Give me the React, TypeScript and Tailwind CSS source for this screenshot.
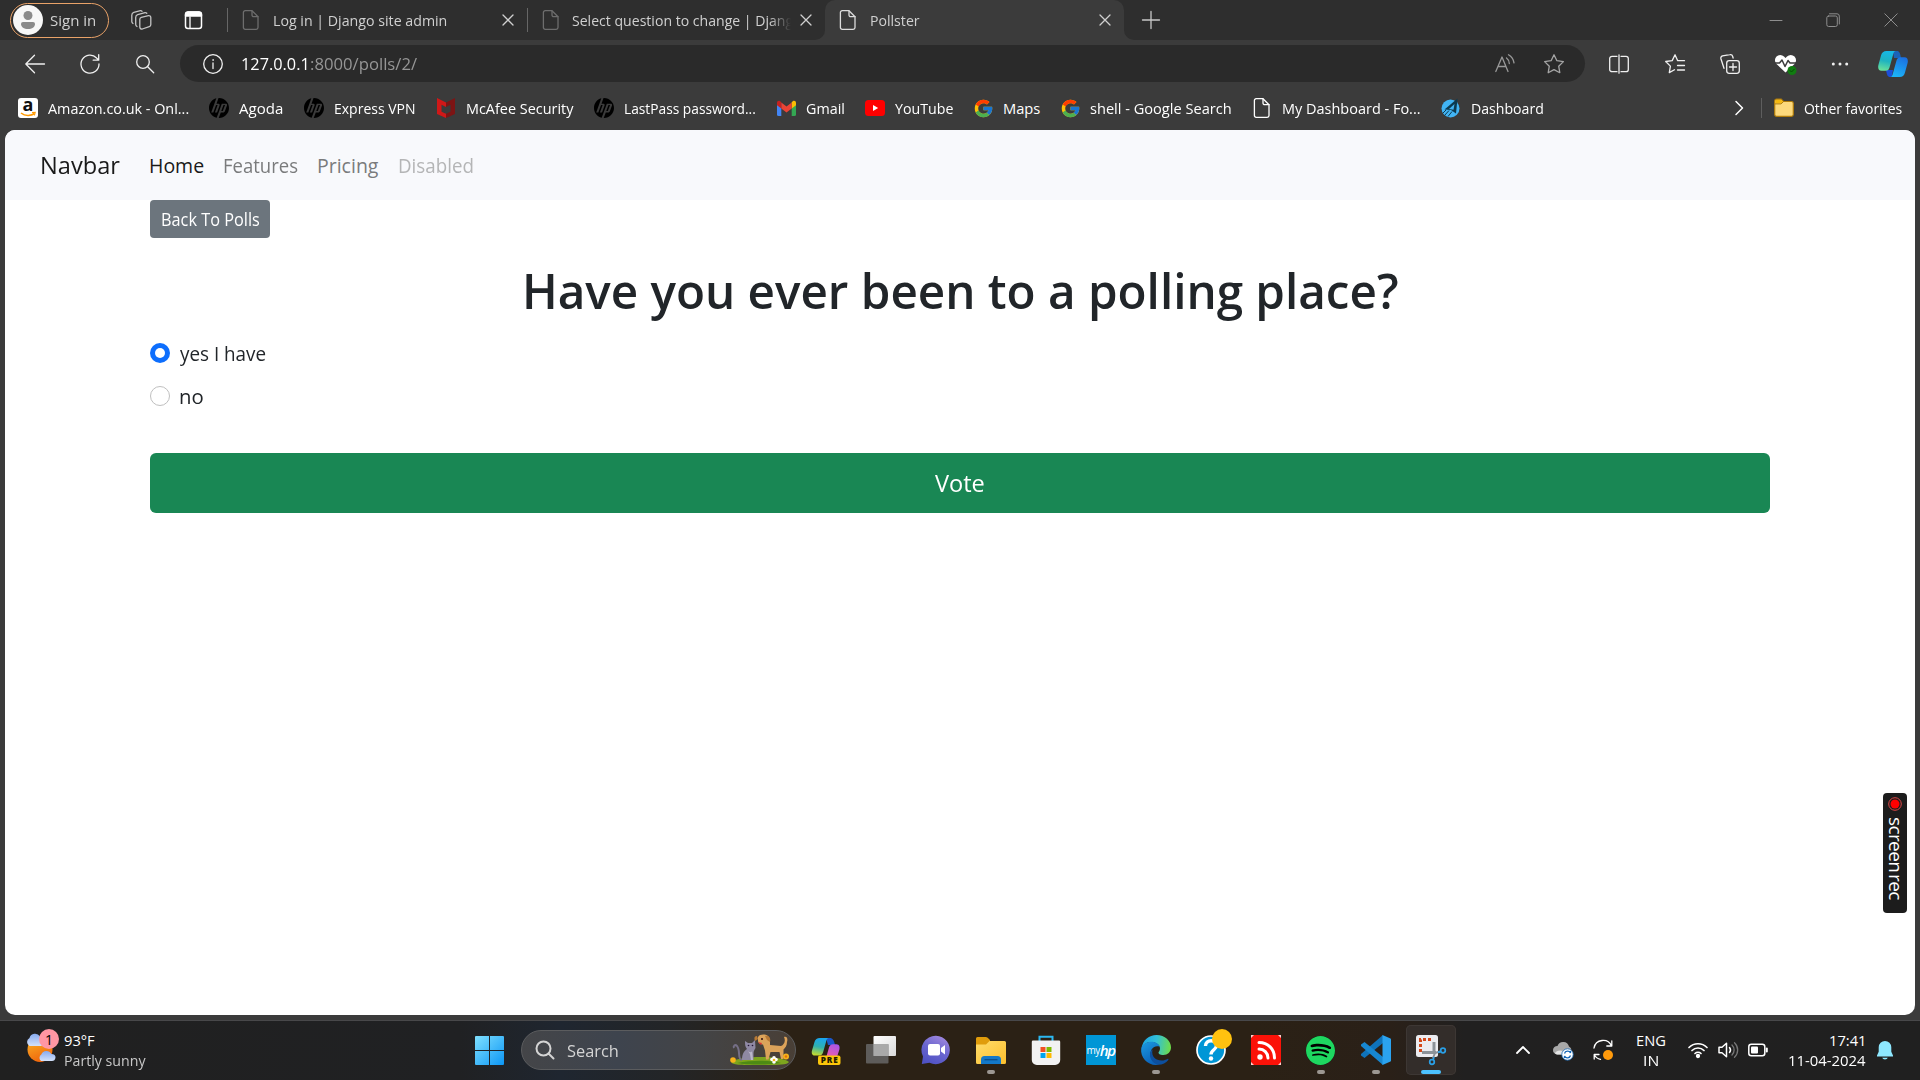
import { useLayoutEffect, useRef, useState } from "react";
import type { ReactNode } from "react";
import { FcGoogle } from "react-icons/fc";
import { SiHp, SiSpotify } from "react-icons/si";

/* Text condensed horizontally so that it fills the width given by its class. */
function Fit({ className, children }: { className: string; children: ReactNode }) {
  const box = useRef<HTMLSpanElement>(null);
  const text = useRef<HTMLSpanElement>(null);
  const [scale, setScale] = useState(1);
  useLayoutEffect(() => {
    if (box.current && text.current && text.current.offsetWidth) {
      setScale(box.current.clientWidth / text.current.offsetWidth);
    }
  }, []);
  return (
    <span ref={box} className={"block shrink-0 whitespace-nowrap " + className}>
      <span ref={text} className="inline-block origin-left" style={{ transform: `scaleX(${scale})` }}>
        {children}
      </span>
    </span>
  );
}

function Ic({ className = "", size = 20, box = "0 0 20 20", children }: { className?: string; size?: number; box?: string; children: ReactNode }) {
  return (
    <svg width={size} height={size} viewBox={box} fill="none" stroke="currentColor" strokeWidth="1.3" strokeLinecap="round" strokeLinejoin="round" className={"block shrink-0 overflow-visible " + className}>
      {children}
    </svg>
  );
}

const Doc = ({ className = "" }: { className?: string }) => (
  <Ic className={className}>
    <path d="M4.2 .7H11l6 6v10.800a1.800 1.800 0 0 1-1.800 1.800H4.200a1.800 1.800 0 0 1-1.800-1.800V2.500A1.800 1.800 0 0 1 4.200 .7Z" />
    <path d="M11 .9V5a1.700 1.700 0 0 0 1.700 1.700H17" />
  </Ic>
);

const Close = ({ className = "" }: { className?: string }) => (
  <Ic size={12} box="0 0 12 12" className={className}>
    <path d="M1 1l10 10M11 1L1 11" />
  </Ic>
);

const Hp = ({ className = "" }: { className?: string }) => (
  <span className={"flex size-5 shrink-0 items-center justify-center rounded-full bg-[#3b3b3b] text-black " + className}>
    <SiHp size={20} />
  </span>
);

function TabBar() {
  return (
    <div className="flex h-10 items-center bg-[#2e2e2e] text-[14.700px] text-[#d0d0d0]">
      <div className="ml-[10px] flex h-[35px] w-[99px] shrink-0 items-center rounded-full border-[1.500px] border-[#e9a268] pl-[2px]">
        <svg width="30" height="30" viewBox="0 0 30 30" className="block shrink-0">
          <circle cx="15" cy="15" r="15" fill="#f7f7f7" />
          <circle cx="15" cy="10.500" r="4.500" fill="#8a8a8a" />
          <path d="M10 17h10a2 2 0 0 1 2 2c0 3-3 5-7 5s-7-2-7-5a2 2 0 0 1 2-2Z" fill="#8a8a8a" />
        </svg>
        <Fit className="ml-[7px] w-[46px]">Sign in</Fit>
      </div>
      <Ic className="ml-[22px] text-[#c4c4c4]">
        <path d="M10.300 7.300 17.500 5.600a2 2 0 0 1 2.300 2v7a2 2 0 0 1-1.500 2l-7 2.400a2 2 0 0 1-2.500-2v-7.800a2 2 0 0 1 1.500-1.900Z" />
        <path d="M6 16.500a2.500 2.500 0 0 1-1.300-2V7.500a3 3 0 0 1 2-2.800L14 2.700a2 2 0 0 1 1.800 .6" />
        <path d="M2 13.500a2.500 2.500 0 0 1-1.200-2V5.200a3 3 0 0 1 2-2.800L9.500 .7a2 2 0 0 1 1.500 .5" />
      </Ic>
      <Ic className="ml-[33px] text-white">
        <rect x="1.500" y="2" width="16" height="16.500" rx="2.500" strokeWidth="1.500" />
        <path d="M1.500 6V4.500A3 3 0 0 1 4 2h11a3 3 0 0 1 2.500 2.500V6Z" fill="currentColor" />
        <path d="M6 7v11" />
      </Ic>
      <span className="ml-[23px] h-6 w-px shrink-0 bg-[#666]" />
      <Doc className="ml-[13px] text-[#6d6d6d]" />
      <Fit className="ml-[12px] w-[174px]">Log in | Django site admin</Fit>
      <Close className="ml-[55px] text-[#d0d0d0]" />
      <span className="ml-[13px] h-6 w-px shrink-0 bg-[#666]" />
      <Doc className="ml-[13px] text-[#6d6d6d]" />
      <div className="ml-[11px] w-[219px] shrink-0 overflow-hidden mask-r-from-90% mask-r-to-100%">
        <Fit className="w-[230px]">Select question to change | Django</Fit>
      </div>
      <Close className="ml-[9px] text-[#d0d0d0]" />
      <div className="relative ml-[13px] flex h-10 w-[299px] shrink-0 items-center rounded-t-[10px] bg-[#3b3b3b]">
        <span className="absolute -left-[10px] bottom-0 size-[10px] bg-[#3b3b3b]"><span className="block size-full rounded-br-[10px] bg-[#2e2e2e]" /></span>
        <span className="absolute -right-[10px] bottom-0 size-[10px] bg-[#3b3b3b]"><span className="block size-full rounded-bl-[10px] bg-[#2e2e2e]" /></span>
        <Doc className="ml-[13px] text-[#dcdcdc]" />
        <Fit className="ml-[12px] w-[50px]">Pollster</Fit>
        <Close className="ml-[179px]" />
      </div>
      <Ic className="ml-[17px] text-[#c8c8c8]">
        <path d="M10 1.500v17M1.500 10h17" />
      </Ic>
      <div className="mr-[22px] ml-auto flex items-center text-[#8e8e8e]">
        <Ic size={14} box="0 0 14 14"><path d="M1 7.500h12" strokeWidth="1" /></Ic>
        <Ic size={14} box="0 0 14 14" className="ml-[43px]">
          <rect x=".8" y="3" width="10.500" height="10.500" rx="1.800" strokeWidth="1" />
          <path d="M3.500 .8H11a2.300 2.300 0 0 1 2.300 2.300V11" strokeWidth="1" />
        </Ic>
        <Ic size={14} box="0 0 14 14" className="ml-[44px]"><path d="M.8 .8l12.400 12.400M13.200 .8L.8 13.200" strokeWidth="1" /></Ic>
      </div>
    </div>
  );
}

function Copilot({ size }: { size: number }) {
  return (
    <svg width={size} height={size} viewBox="0 0 30 30" className="block shrink-0">
      <defs>
        <linearGradient id="cpa" x1="0.500" y1="0" x2="0.300" y2="1">
          <stop offset="0" stopColor="#16b8e8" /><stop offset=".5" stopColor="#1fb3c0" /><stop offset="1" stopColor="#6be29a" />
        </linearGradient>
        <linearGradient id="cpb" x1="0.800" y1="0" x2="0.400" y2="1">
          <stop offset="0" stopColor="#1b6ee0" /><stop offset="1" stopColor="#1cb4f8" />
        </linearGradient>
      </defs>
      <path d="M8 21h7l-1 5.500c-.3 1-1 1.500-2 1.500-2.500 0-3-2-4-7Z" fill="#1c4fd8" />
      <path d="M15 2h4c2.500 0 3 2 4 7h-7Z" fill="#1b63b8" />
      <path d="M8.500 2H18c-2 0-2.500 2-3 4l-3.500 12.500c-.6 2-1.600 3.300-4 3.300H3.500C.5 21.800-.3 19 .4 16L3 6.500C3.800 3.500 5.500 2 8.500 2Z" fill="url(#cpa)" />
      <path d="M21.500 28H12c2 0 2.500-2 3-4l3.500-12.500c.6-2 1.600-3.300 4-3.300h4c3 0 3.800 2.800 3.100 5.800L27 23.500c-.8 3-2.500 4.500-5.500 4.500Z" fill="url(#cpb)" />
    </svg>
  );
}

function Toolbar() {
  return (
    <div className="flex h-[47px] items-center text-[#f0f0f0]">
      <Ic className="ml-[25px]"><path d="M19.500 10H.8M9.500 1.300.8 10l8.700 8.700" /></Ic>
      <Ic className="ml-[35px]"><path d="M19 10A9 9 0 1 1 16.600 4l2 2M18.700 .7v5.500h-5.500" /></Ic>
      <Ic className="ml-[35px]"><circle cx="8" cy="8" r="6.300" /><path d="M12.700 12.700l6 6" /></Ic>
      <div className="ml-[25px] flex h-[37px] w-[1405px] shrink-0 items-center rounded-full bg-[#2a2a2a]">
        <Ic className="ml-[23px]"><circle cx="10" cy="10" r="9.300" /><path d="M10 9v5.500" /><circle cx="10" cy="6" r=".5" fill="currentColor" strokeWidth=".6" /></Ic>
        <div className="ml-[18px] flex pt-px text-[17px]">
          <Fit className="w-[69px] text-white">127.0.0.1</Fit>
          <Fit className="w-[107px] text-[#969696]">:8000/polls/2/</Fit>
        </div>
        <Ic className="ml-auto text-[#999]"><path d="M.8 17.500 7 3l6 14.500M3 12.500h8" /><path d="M11.500 4a7 7 0 0 1 2.800 5.500M13.500 .8a11 11 0 0 1 5.500 8" /></Ic>
        <Ic className="mr-[21px] ml-[29px] text-[#a5a5a5]"><path d="M10 .8l2.900 5.900 6.500.9-4.700 4.600 1.100 6.500L10 15.600l-5.800 3.100 1.100-6.500L.6 7.600l6.500-.9Z" /></Ic>
      </div>
      <Ic className="ml-[24px]"><path d="M8 2.300H3A2.300 2.300 0 0 0 .7 4.600v10.800A2.300 2.300 0 0 0 3 17.700h5M12 2.300h5a2.300 2.300 0 0 1 2.300 2.300v10.800a2.300 2.300 0 0 1-2.300 2.300h-5M10 .8v18.400" /></Ic>
      <Ic className="ml-[36px]"><path d="M19.500 6.700H12.700L10 .8 7.200 6.600l-6.500.9 4.700 4.600-1.100 6.500 5.200-2.800M12.500 11.500h7M12.500 16h7" /></Ic>
      <Ic className="ml-[35px]"><rect x="6.700" y="6.700" width="12.600" height="12.600" rx="2.500" /><path d="M13 9.500v7M9.500 13h7M4 14.300 .9 4.700A2.500 2.500 0 0 1 2.500 1.800L9.800 .7a2.500 2.500 0 0 1 2.900 1.800l.4 1.500" /></Ic>
      <Ic className="ml-[35px]">
        <path d="M10.500 18.500 1.500 10a5.300 5.300 0 0 1 0-7.500 5.300 5.300 0 0 1 7.500 0L10.500 4l1.500-1.500a5.300 5.300 0 0 1 7.500 0 5.300 5.300 0 0 1 0 7.500Z" fill="#fff" stroke="none" />
        <path d="M0 9h4.500L7 6l3 6.500L13 6.500 15 9h6" stroke="#3b3b3b" strokeWidth="1.500" />
        <circle cx="17" cy="16.500" r="4.500" fill="#107c10" stroke="none" />
        <path d="M15 16.500l1.500 1.500 2.800-2.800" stroke="#064a06" strokeWidth="1" />
      </Ic>
      <Ic className="ml-[35px]"><g fill="currentColor" stroke="none"><circle cx="3.300" cy="10" r="1.500" /><circle cx="10" cy="10" r="1.500" /><circle cx="16.700" cy="10" r="1.500" /></g></Ic>
      <div className="ml-[28px]"><Copilot size={30} /></div>
    </div>
  );
}

const Folder = () => (
  <svg width="20" height="20" viewBox="0 0 20 20" className="block shrink-0">
    <path d="M.7 3a1.800 1.800 0 0 1 1.800-1.800h4.700L9.500 3.500h8a1.800 1.800 0 0 1 1.800 1.800v11.200a1.800 1.800 0 0 1-1.800 1.800h-15A1.800 1.800 0 0 1 .7 16.500Z" fill="#fcd97c" stroke="#b07c0a" strokeWidth="1.200" />
    <path d="M1.300 5.500V3a1.200 1.200 0 0 1 1.200-1.200H7l2 1.900-2 1.800Z" fill="#f5b90f" />
    <path d="M1 5.900h6l2.500-2.300" stroke="#b07c0a" fill="none" />
  </svg>
);

function Bookmarks() {
  return (
    <div className="flex h-[43px] items-center pb-px text-[14.700px] text-white">
      <svg width="20" height="20" viewBox="0 0 20 20" className="ml-[18px] block shrink-0">
        <rect width="20" height="20" rx="3" fill="#fff" />
        <text x="10" y="13" textAnchor="middle" fontSize="18" fontWeight="700" fontFamily="Open Sans" fill="#111">a</text>
        <path d="M3 15c4 3.200 10 3.200 13.500 .5" stroke="#f90" strokeWidth="1.600" fill="none" />
        <path d="M14 14.500l3.200-.2-.8 3" stroke="#f90" strokeWidth="1.100" fill="none" />
      </svg>
      <Fit className="ml-[10px] w-[141px]">Amazon.co.uk - Onl...</Fit>
      <Hp className="ml-5" />
      <Fit className="ml-[10px] w-[44px]">Agoda</Fit>
      <Hp className="ml-[21px]" />
      <Fit className="ml-[10px] w-[82px]">Express VPN</Fit>
      <svg width="18" height="20" viewBox="0 0 18 20" className="ml-[21px] block shrink-0">
        <path d="M0 0l9 4.500V9L4.500 6.700v7L9 15.800V20L0 16Z" fill="#d01818" />
        <path d="M18 0L9 4.500V9l4.500-2.300v7L9 15.800V20l9-4Z" fill="#7d1414" />
      </svg>
      <Fit className="ml-[11px] w-[107px]">McAfee Security</Fit>
      <Hp className="ml-[21px]" />
      <Fit className="ml-[10px] w-[132px]">LastPass password...</Fit>
      <svg width="19" height="16" viewBox="0 0 19 16" className="ml-[21px] block shrink-0">
        <path d="M0 3h4.300v13H1.500A1.500 1.500 0 0 1 0 14.500Z" fill="#4285f4" />
        <path d="M14.700 3H19v11.500a1.500 1.500 0 0 1-1.500 1.500h-2.800Z" fill="#34a853" />
        <path d="M14.700 2.500C16 0 19 .5 19 3v2.200l-4.300 3.300Z" fill="#fbbc04" />
        <path d="M4.300 2.500l5.200 4 5.200-4v6L9.500 12.400 4.300 8.500Z" fill="#ea4335" />
        <path d="M0 3C0 .5 2.700-.2 4.300 2.500v6L0 5.200Z" fill="#c5221f" />
      </svg>
      <Fit className="ml-[10px] w-[39px]">Gmail</Fit>
      <svg width="20" height="16" viewBox="0 0 20 16" className="ml-[20px] block shrink-0"><rect width="20" height="16" rx="3.500" fill="#f00" /><path d="M8 5l5.200 3L8 11Z" fill="#fff" /></svg>
      <Fit className="ml-[10px] w-[58px]">YouTube</Fit>
      <FcGoogle size={21} className="ml-[20px] shrink-0" />
      <Fit className="ml-[9px] w-[37px]">Maps</Fit>
      <FcGoogle size={21} className="ml-[20px] shrink-0" />
      <Fit className="ml-[9px] w-[142px]">shell - Google Search</Fit>
      <Doc className="ml-5 text-white" />
      <Fit className="ml-[10px] w-[139px]">My Dashboard - Fo...</Fit>
      <svg width="20" height="20" viewBox="0 0 20 20" className="ml-5 block shrink-0">
        <circle cx="9.500" cy="10.500" r="9" fill="#41b4f4" />
        <path d="M16.500 .5 3.500 11.500l6.500 .5 5 3.500Z" fill="#0c3a50" /><path d="M13.500 6 8 11l4.500 .8Z" fill="#41b4f4" />
        <path d="M8 12.500l-4.500 5M11 13.500l-4 5M5 12l-3 3" stroke="#0c3a50" strokeWidth="1" />
      </svg>
      <Fit className="ml-[10px] w-[73px]">Dashboard</Fit>
      <Ic size={14} box="0 0 14 14" className="ml-auto"><path d="M4 0.500l6.500 6.500L4 13.500" strokeWidth="1.500" /></Ic>
      <span className="mr-3 ml-[15px] h-5 w-px shrink-0 bg-[#5e5e5e]" />
      <Folder />
      <Fit className="mr-[18px] ml-[10px] w-[98px]">Other favorites</Fit>
    </div>
  );
}

function PollPage() {
  return (
    <div className="relative mx-[5px] h-[885px] shrink-0 overflow-hidden rounded-[10px] bg-white text-[#212529]">
      <nav className="flex h-[70px] items-center bg-[#f8f9fc] pt-px pl-[35px] text-[19.500px]">
        <Fit className="w-[80px] text-[24.500px] text-[#1a1a1a]">Navbar</Fit>
        <Fit className="ml-[29px] w-[55px] text-[#1a1a1a]">Home</Fit>
        <Fit className="ml-[19px] w-[75px] text-[#7a7b7c]">Features</Fit>
        <Fit className="ml-[19px] w-[61px] text-[#7a7b7c]">Pricing</Fit>
        <Fit className="ml-[20px] w-[76px] text-[#b4b5b6]">Disabled</Fit>
      </nav>
      <main className="mx-[145px]">
        <button className="flex h-[38px] w-[120px] items-center rounded-[4px] bg-[#6c757d] pt-px pl-[11px] text-[17.300px] text-white">
          <Fit className="w-[99px] text-left">Back To Polls</Fit>
        </button>
        <h1 className="mt-[20px] flex justify-center text-[48.500px] leading-[64px] font-semibold">
          <Fit className="w-[877px]">Have you ever been to a polling place?</Fit>
        </h1>
        <div className="mt-[17px] flex h-[30px] items-start text-[19.500px] leading-[30px]">
          <span className="mt-1 flex size-5 items-center justify-center rounded-full bg-[#0d6efd]"><span className="size-[10px] rounded-full bg-white" /></span>
          <Fit className="ml-[10px] w-[86px]">yes I have</Fit>
        </div>
        <div className="mt-[13px] flex h-[30px] items-start text-[19.500px] leading-[30px]">
          <span className="mt-1 size-5 rounded-full border border-[#bfbfbf] bg-white" />
          <Fit className="ml-[9px] w-[25px]">no</Fit>
        </div>
        <button className="mt-[41px] flex h-[60px] w-full items-center justify-center rounded-[6px] bg-[#198754] pt-px text-[24.500px] text-white">
          <Fit className="w-[50px] text-left">Vote</Fit>
        </button>
      </main>
      <div className="absolute top-[663px] left-[1878px] flex h-[120px] w-6 flex-col items-center rounded-[4px] bg-[#1c1c1c] pt-[4px] text-white">
        <svg width="14" height="14" viewBox="0 0 14 14" className="block shrink-0"><circle cx="7" cy="7" r="6.300" fill="none" stroke="#e04848" /><circle cx="7" cy="7" r="4.500" fill="#f00" /></svg>
        <span className="mt-[6px] ml-[2px] flex h-[90px] w-6 gap-[2px] text-[19px] leading-6 font-medium tracking-[-0.600px] [writing-mode:vertical-rl]">
          <span>screen</span><span>rec</span>
        </span>
      </div>
    </div>
  );
}

function AppSlot({ children, state = "none" }: { children: ReactNode; state?: "none" | "open" | "active" }) {
  return (
    <div className="flex w-[55px] shrink-0 justify-center">
      <div className={"relative flex h-[50px] w-[50px] items-center justify-center rounded-[5px] " + (state === "active" ? "bg-[#332d2a] ring-1 ring-[#3d3734] ring-inset" : "")}>
        {children}
        {state !== "none" && <span className={"absolute bottom-px h-1 rounded-full " + (state === "active" ? "w-5 bg-[#4cc2ff]" : "w-2 bg-[#9c9792]")} />}
      </div>
    </div>
  );
}

const Pets = () => (
  <svg width="62" height="32" viewBox="0 0 62 32" className="block shrink-0">
    <path d="M2 28c8-6 50-7 58 0-2 3-10 3-30 3S4 31 2 28Z" fill="#7ea51e" />
    <path d="M8 29c14-3 34-3 44 0-8 2-34 2-44 0Z" fill="#4d8a14" />
    <path d="M13 26C8 25 12 17 8 12c-2-2-4 0-3 2" stroke="#756f86" strokeWidth="2" fill="none" />
    <path d="M16 7l3 2h4l3-3 .5 8c-1 2-2 3-2 5v7H13c0-6 2-9 5-11-2-2-2-5-2-8Z" fill="#8f89a3" />
    <path d="M19 17c2 2 4 1 4 0l1 9h-2l-1-6Z" fill="#bcb7cb" />
    <circle cx="19.500" cy="11.500" r=".8" fill="#213" /><circle cx="23.500" cy="11.500" r=".8" fill="#213" />
    <path d="M29 3c2-3 7-3 10-1l2 3 0 6 11 1c3-1 5-5 3-9 3-1 4 2 3 5 0 4-2 6-3.500 7.500V25h-2.500l-1.500-7h-9l-2 7.500h-2.500l-1-9-2-6c-2 0-5-1-5-4Z" fill="#dca35a" />
    <path d="M36 2c4-1 6 2 5 6l-3-2ZM28 2c-3 0-3 3-2 5l3-2Z" fill="#b87934" />
    <circle cx="33" cy="5" r="1" fill="#311" /><path d="M29 8l4 1-1 2Z" fill="#d33" />
    <g fill="#f6b21b"><circle cx="4" cy="26" r="2.800" /><circle cx="57" cy="22.500" r="3" /></g>
    <g fill="#fff"><circle cx="43" cy="25.500" r="1.800" /><circle cx="47" cy="25.500" r="1.800" /><circle cx="45" cy="23.800" r="1.800" /><circle cx="45" cy="28" r="1.800" /></g>
    <circle cx="45" cy="26" r="1.300" fill="#f5b31b" /><circle cx="57" cy="22.500" r="1.200" fill="#e2700c" />
  </svg>
);

const big = { width: 30, height: 30, viewBox: "0 0 30 30", className: "block shrink-0 overflow-visible" };

function Taskbar() {
  return (
    <div className="mt-[5px] flex h-[60px] shrink-0 items-center border-t border-[#48484a] bg-[linear-gradient(90deg,#202020_0px,#202123_460px,#1f2630_560px,#232527_670px,#2b2115_780px,#2b2115_1250px,#2a2018_1390px,#212020_1465px,#202020_1920px)]">
      <div className="relative mb-[3px] ml-[24px] w-[34px] shrink-0">
        <svg width="34" height="34" viewBox="0 0 34 34" className="block overflow-visible">
          <defs>
            <linearGradient id="sun" x1="0" y1="0" x2=".4" y2="1"><stop offset="0" stopColor="#fbb829" /><stop offset="1" stopColor="#f0680c" /></linearGradient>
            <linearGradient id="cld" x1="0" y1="0" x2="0" y2="1"><stop offset="0" stopColor="#86aaf0" /><stop offset="1" stopColor="#d4e2fb" /></linearGradient>
          </defs>
          <circle cx="16" cy="17.500" r="12.500" fill="url(#sun)" />
          <path d="M5.500 14a4.500 4.500 0 0 1 0-8A5.800 5.800 0 0 1 16 4.500c4 0 5 3 4.500 5.500-.3 2.500-2 4-4 4Z" fill="url(#cld)" />
          <path d="M17 29a4 4 0 0 1 .3-6.500 5.500 5.500 0 0 1 10-.5c3 0 4.500 1.500 4.200 3.700-.3 2-1.500 3.300-3.500 3.300Z" fill="url(#cld)" />
        </svg>
        <span className="absolute -top-[3px] left-[15px] flex size-5 items-center justify-center rounded-full bg-[#ff96a3] text-[14px] text-black">1</span>
      </div>
      <div className="mb-[2px] ml-[6px] w-[90px] text-[14.700px] leading-5">
        <Fit className="w-[31px] text-white">93°F</Fit>
        <Fit className="w-[82px] text-[#c8c8c8]">Partly sunny</Fit>
      </div>
      <svg width="29" height="29" viewBox="0 0 29 29" className="ml-[321px] block shrink-0">
        <defs><linearGradient id="win" x1="0" y1="0" x2="1" y2="1"><stop offset="0" stopColor="#7fe0ff" /><stop offset="1" stopColor="#0c96f5" /></linearGradient></defs>
        <path d="M1 0h13v14H0V1a1 1 0 0 1 1-1ZM15 0h13a1 1 0 0 1 1 1v13H15ZM0 15h14v14H1a1 1 0 0 1-1-1ZM15 15h14v13a1 1 0 0 1-1 1H15Z" fill="url(#win)" />
      </svg>
      <div className="mb-px ml-[17px] flex h-10 w-[275px] shrink-0 items-center rounded-full border border-[#5b5c5e] bg-[linear-gradient(90deg,#444548,#3e444e_35%,#434446_65%,#493f36)] text-[17px] text-[#d4d4d4]">
        <Ic className="ml-[13px]"><circle cx="8.500" cy="8.500" r="7" strokeWidth="2" /><path d="M13.500 13.500l5 5" strokeWidth="2" /></Ic>
        <Fit className="ml-[12px] w-[52px] pt-px">Search</Fit>
        <div className="ml-[110px]"><Pets /></div>
      </div>
      <div className="mb-px ml-[2px] flex">
        <AppSlot>
          <svg {...big}>
            <defs>
              <linearGradient id="ca" x1=".5" y1="0" x2=".3" y2="1"><stop offset="0" stopColor="#19a6ef" /><stop offset=".5" stopColor="#2fb0b0" /><stop offset="1" stopColor="#c8dc2c" /></linearGradient>
              <linearGradient id="cb" x1=".8" y1="0" x2=".4" y2="1"><stop offset="0" stopColor="#a855e8" /><stop offset="1" stopColor="#ff5f9a" /></linearGradient>
            </defs>
            <path d="M15 3h4c2.500 0 4 2 5 7h-7Z" fill="#1a56c8" />
            <path d="M9 3h9c-2 0-2.500 2-3 4l-3 10.500c-.6 2-1.600 3-4 3H3.500C1 20.500 .3 18 1 15.500L3.500 7C4.300 4.500 6 3 9 3Z" fill="url(#ca)" />
            <path d="M20 27h-8c2 0 2.500-2 3-4l3-10.500c.6-2 1.600-3.300 4-3.300h3.500c3 0 3.500 2.800 2.900 5.300L26 22c-.8 3-3 5-6 5Z" fill="url(#cb)" />
            <rect x="7" y="20.500" width="22.500" height="9.500" rx="2" fill="#fbc60a" />
            <text x="18.200" y="28.200" textAnchor="middle" fontSize="8.200" fontWeight="800" fontFamily="Open Sans" fill="#231b00" textLength="17">PRE</text>
          </svg>
        </AppSlot>
        <AppSlot>
          <svg {...big}>
            <defs><linearGradient id="tv" x1="0" y1="0" x2="1" y2="1"><stop offset="0" stopColor="#fff" /><stop offset="1" stopColor="#d9d9d9" /></linearGradient></defs>
            <rect x="7.500" y="1" width="22.500" height="20" rx="1" fill="url(#tv)" />
            <rect x="0" y="9" width="22.500" height="19.500" rx="1" fill="#6c6c6c" fillOpacity=".8" />
            <rect x="7.500" y="9" width="15" height="12" fill="#a9a9a9" />
          </svg>
        </AppSlot>
        <AppSlot>
          <svg {...big}>
            <defs><linearGradient id="ch" x1=".8" y1="0" x2=".3" y2="1"><stop offset="0" stopColor="#a48adf" /><stop offset=".5" stopColor="#6b66cf" /><stop offset="1" stopColor="#4f52c4" /></linearGradient></defs>
            <path d="M15 .8A14.200 14.200 0 1 1 8.500 27.800L.8 29 2 21.500A14.200 14.200 0 0 1 15 .8Z" fill="url(#ch)" />
            <rect x="7" y="9" width="12" height="11.500" rx="2" fill="#fff" /><path d="M20 13l4-3v9.500l-4-3Z" fill="#fff" />
          </svg>
        </AppSlot>
        <AppSlot state="open">
          <svg {...big}>
            <defs><linearGradient id="fe" x1="0" y1="0" x2="1" y2="1"><stop offset="0" stopColor="#ffdc6b" /><stop offset="1" stopColor="#fbbf2d" /></linearGradient></defs>
            <path d="M0 3.500A1.500 1.500 0 0 1 1.500 2h8.200a3 3 0 0 1 2 .8L14 5v6H0Z" fill="#e09c0b" />
            <path d="M0 9.500h10L13.500 6H28.500A1.500 1.500 0 0 1 30 7.500v20a1.500 1.500 0 0 1-1.500 1.500h-27A1.500 1.500 0 0 1 0 27.500Z" fill="url(#fe)" />
            <path d="M5 29v-4.500A3.500 3.500 0 0 1 8.500 21h13a3.500 3.500 0 0 1 3.500 3.500V29Z" fill="#1378c8" />
            <path d="M8.500 24.700h13" stroke="#0a4e8c" strokeWidth="1.300" />
          </svg>
        </AppSlot>
        <AppSlot>
          <svg {...big}>
            <path d="M8.500 6V1.800h13V6" stroke="#2cb8f0" strokeWidth="2" fill="none" />
            <path d="M2 5.500h26a1.200 1.200 0 0 1 1.200 1.200V25a5 5 0 0 1-5 5H5.800a5 5 0 0 1-5-5V6.700A1.200 1.200 0 0 1 2 5.500Z" fill="#f2f2f2" />
            <path d="M9.500 12h5v5h-5Z" fill="#f25022" /><path d="M15.500 12h5v5h-5Z" fill="#7fba00" /><path d="M9.500 18h5v5h-5Z" fill="#00a4ef" /><path d="M15.500 18h5v5h-5Z" fill="#ffb900" />
          </svg>
        </AppSlot>
        <AppSlot>
          <div className="flex size-[30px] items-center justify-center bg-[#0096d6] text-white">
            <span className="text-[10px] leading-none tracking-[-0.500px]">my</span>
            <span className="text-[15px] leading-none font-semibold tracking-[-1.500px] italic">hp</span>
          </div>
        </AppSlot>
        <AppSlot state="open">
          <svg {...big}>
            <defs>
              <linearGradient id="ea" x1="0" y1=".3" x2="1" y2=".4"><stop offset="0" stopColor="#1ca5e4" /><stop offset=".5" stopColor="#32bfd8" /><stop offset="1" stopColor="#6ddd4c" /></linearGradient>
              <linearGradient id="eb" x1="0" y1="0" x2=".5" y2="1"><stop offset="0" stopColor="#1b9be2" /><stop offset="1" stopColor="#0b61b8" /></linearGradient>
            </defs>
            <path d="M.5 13C2 5 8 0 15.500 0 24 0 30 6 30 12.500c0 4.500-3.500 7.500-7.500 7.500-4 0-5-1.500-5-2.500 0-.8 1.500-1.500 1.500-4C19 9.500 14.500 7 10 7S2 10 .5 13Z" fill="url(#ea)" />
            <path d="M.2 13.500C1.500 9 6 6.800 10.500 6.800c4 0 7.500 2.200 8.300 5-6-2-9.300 2.700-9.300 7.200 0 6 4.500 9.500 8.500 10.600-1 .3-2 .4-3 .4C6 30-.8 22 .2 13.500Z" fill="url(#eb)" />
            <path d="M11.500 14.500C10 22 15 25.500 20.500 25.500c2.500 0 4.500-.8 6-1.600.7-.3 1.200.3.800 1C25 28 21.500 29.700 17.500 29.800 12 28.500 8.500 24 9 19c.2-2 1-3.500 2.500-4.500Z" fill="#0d4f9e" />
          </svg>
        </AppSlot>
        <AppSlot>
          <svg {...big}>
            <circle cx="15" cy="15" r="14" fill="#0096d6" stroke="#fff" strokeWidth="1.700" />
            <path d="M9.500 11c0-7 11-7 11-.5 0 4.500-5.500 4-5.500 9" stroke="#fff" strokeWidth="3.400" fill="none" />
            <circle cx="15" cy="23.500" r="2.200" fill="#fff" /><circle cx="26" cy="4" r="10" fill="#ffc20f" />
          </svg>
        </AppSlot>
        <AppSlot>
          <svg {...big}>
            <rect width="30" height="30" fill="#fb1208" />
            <circle cx="9" cy="22" r="2.700" fill="#fff" />
            <path d="M8 14c5 0 9 4 9 9M8 7.500c9 0 15.500 6.500 15.500 15.500" stroke="#fff" strokeWidth="3" fill="none" strokeLinecap="round" />
            <path d="M0 0h3L0 3ZM30 0v3l-3-3ZM0 30v-3l3 3ZM30 30h-3l3-3Z" fill="#fcc" />
          </svg>
        </AppSlot>
        <AppSlot state="open"><span className="rounded-full bg-black text-[#1ed760]"><SiSpotify size={29} /></span></AppSlot>
        <AppSlot state="open">
          <svg {...big}>
            <path d="M22 0v8L3.500 23 0 20.500V19Z" fill="#0f73bb" />
            <path d="M22 30v-8L3.500 7 0 9.500V11Z" fill="#1787d1" />
            <path d="M21.500 0l8 3.500a1 1 0 0 1 .5 1v21a1 1 0 0 1-.5 1l-8 3.500Z" fill="#2ba3f0" />
          </svg>
        </AppSlot>
        <AppSlot state="active">
          <svg {...big}>
            <rect x="0" y="0" width="22" height="22" rx="2.500" fill="#ececf0" />
            <path d="M4.500 17V4.500H17" stroke="#d4481a" strokeWidth="3" strokeDasharray="3 2" fill="none" />
            <path d="M18 7v12M6 17.500h14" stroke="#8c9298" strokeWidth="3" /><path d="M19 18l-2 5M19 18l5-1.500" stroke="#8c9298" strokeWidth="2" />
            <circle cx="16" cy="27" r="2.300" fill="none" stroke="#2a9fe6" strokeWidth="1.700" /><circle cx="27" cy="15.500" r="2.300" fill="none" stroke="#2a9fe6" strokeWidth="1.700" />
            <path d="M17 25l1-3M25 16.300l-3 1" stroke="#2a9fe6" strokeWidth="1.800" />
          </svg>
        </AppSlot>
      </div>
      <div className="mb-px ml-auto flex items-center text-[14.700px] leading-5 text-white">
        <Ic size={14} box="0 0 14 14"><path d="M1 10l6-6 6 6" strokeWidth="1.800" /></Ic>
        <svg width="20" height="20" viewBox="0 0 20 20" className="ml-[23px] block overflow-visible">
          <path d="M4 14.500a4 4 0 0 1 .5-8.500A6 6 0 0 1 16 6.500c2 1 3 3 2 6l-4 2Z" fill="#a8a8a8" /><path d="M2 13.500c0-2 4-4 8-2.500l3 3.500H4Z" fill="#e4e4e4" />
          <circle cx="14.500" cy="14.500" r="5.700" fill="#fff" stroke="#1668b8" strokeWidth=".8" />
          <path d="M11.500 13.500a3.200 3.200 0 0 1 6-.5v-2M17.500 15.500a3.200 3.200 0 0 1-6 .5v2" stroke="#1668b8" strokeWidth="1.300" fill="none" />
        </svg>
        <Ic className="ml-[20px]"><path d="M1 8A9.200 9.200 0 0 1 18.500 6M18.800 .8V6h-5M1.200 19v-4.500H6M1.500 15c1 2 3 3.800 6 4.300" /><circle cx="15" cy="15" r="5" fill="#ff9a0c" stroke="none" /></Ic>
        <div className="ml-[23px] flex w-[30px] flex-col items-center"><Fit className="w-[30px]">ENG</Fit><Fit className="w-[16px]">IN</Fit></div>
        <Ic className="ml-[22px]">
          <g strokeWidth="1.700"><path d="M1 7.500a12.700 12.700 0 0 1 18 0M4 10.500a8.500 8.500 0 0 1 12 0M7 13.500a4.300 4.300 0 0 1 6 0" /></g><circle cx="10" cy="16" r="1.500" fill="currentColor" />
        </Ic>
        <Ic className="ml-[10px]"><path d="M1 7.200h3L8.500 3.200v13.600L4 12.800H1Z" strokeWidth="1.500" /><path d="M11.500 7.500a4 4 0 0 1 0 5" strokeWidth="1.500" /><path d="M14 5a7 7 0 0 1 0 10M16.500 2.700a10 10 0 0 1 0 14.600" stroke="#777" /></Ic>
        <Ic className="ml-[10px]"><rect x=".8" y="4.200" width="16" height="11.600" rx="2.500" strokeWidth="1.500" /><rect x="3" y="6.500" width="7" height="7" rx="1" fill="currentColor" stroke="none" /><path d="M18.800 8.500v3" strokeWidth="2" /></Ic>
        <div className="ml-[20px] flex w-[78px] flex-col items-end"><Fit className="w-[37px]">17:41</Fit><Fit className="w-[78px]">11-04-2024</Fit></div>
        <svg width="16" height="19" viewBox="0 0 16 19" className="mr-[27px] ml-[11px] block"><path d="M8 0a6.300 6.300 0 0 1 6.300 6.300v4.500L16 14.500a.8.800 0 0 1-.8 1.100H.8a.8.800 0 0 1-.8-1.100l1.700-3.700V6.300A6.300 6.300 0 0 1 8 0ZM5.200 16.700h5.600a2.900 2.300 0 0 1-5.600 0Z" fill="#8ee8ff" /></svg>
      </div>
    </div>
  );
}

export default function App() {
  return (
    <div className="flex h-[1080px] w-[1920px] flex-col overflow-hidden bg-[#3b3b3b] font-['Open_Sans','Noto_Sans',sans-serif]">
      <TabBar />
      <Toolbar />
      <Bookmarks />
      <PollPage />
      <Taskbar />
    </div>
  );
}
